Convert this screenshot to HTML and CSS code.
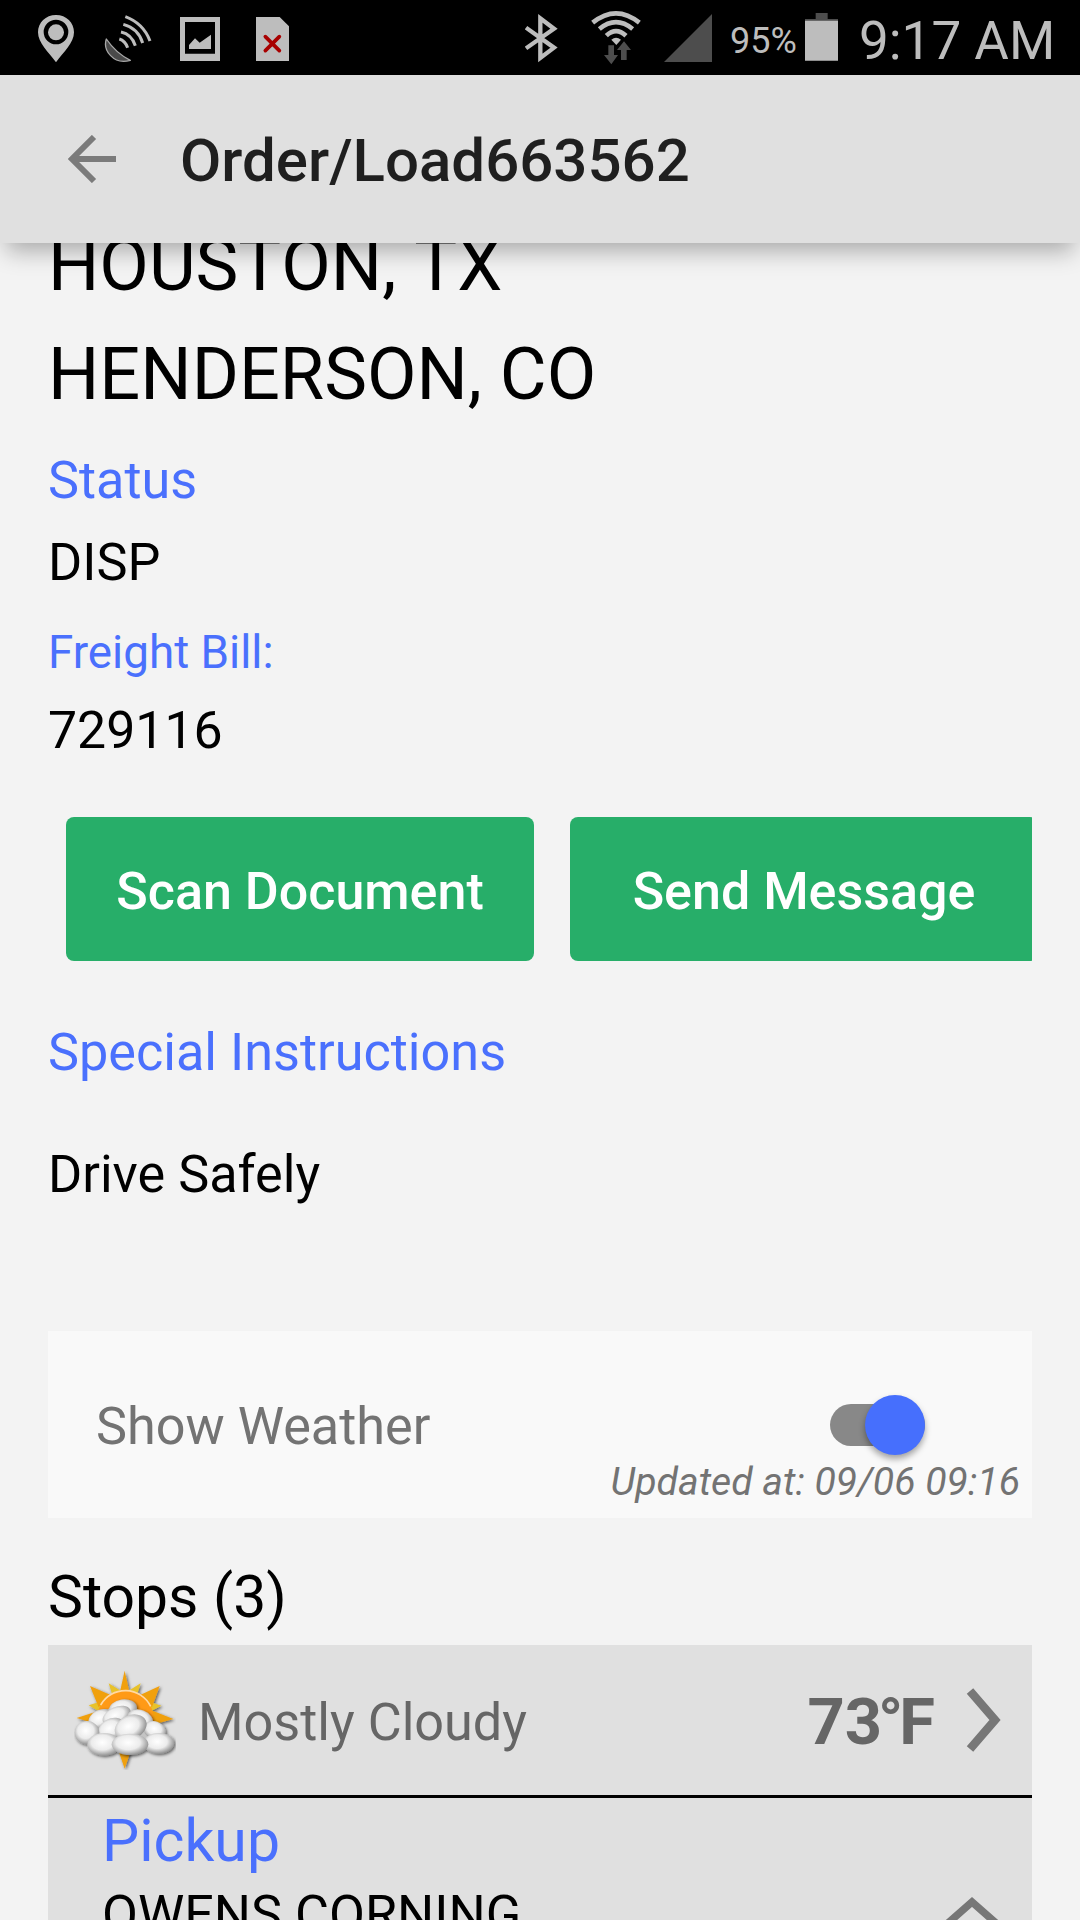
FILE: index.html
```html
<!DOCTYPE html>
<html lang="en">
<head>
  <meta charset="UTF-8" />
  <meta name="viewport" content="width=device-width, initial-scale=1.0"/>
  <title>Order/Load663562</title>
  <link rel="stylesheet" href="styles.css">
</head>
<body>
  <div class="statusbar">
    <div class="notifications">
      <svg width="36" height="75" viewBox="114 0 108 225">
        <path fill="#bdbdbd" fill-rule="evenodd" d="M168 45c-31 0-54 23-54 52 0 32 32 60 54 90 22-30 54-58 54-90 0-29-23-52-54-52zM168 59a37 37 0 1 1 0 74a37 37 0 1 1 0-74z"/>
        <circle cx="168" cy="97" r="24" fill="#bdbdbd"/>
      </svg>
      <svg width="48" height="75" viewBox="312 0 144 225">
        <path fill="#4a4a4a" stroke="#a8a8a8" stroke-width="4" stroke-linejoin="round" d="M319 117C308 150 340 196 391 181C365 168 338 145 319 117z"/>
        <g fill="none" stroke="#bdbdbd" stroke-width="9">
          <path d="M376 50Q430 70 450 123"/>
          <path d="M370 73Q415 85 428 129"/>
          <path d="M363 96Q395 103 406 137"/>
          <path d="M358 117Q375 122 383 143"/>
        </g>
      </svg>
      <svg width="40" height="75" viewBox="540 0 120 225">
        <path fill="#bdbdbd" fill-rule="evenodd" d="M540 51h120v132H540zM555 66v95h90V66z"/>
        <path fill="#bdbdbd" d="M567 147v-12l18-20 14 13 34-24v43z"/>
      </svg>
      <svg width="33" height="75" viewBox="768 0 99 225">
        <path fill="#bdbdbd" d="M768 51h71l28 28v104h-99z"/>
        <path stroke="#a80000" stroke-width="11" stroke-linecap="round" d="M796 110l42 42M838 110l-42 42"/>
      </svg>
    </div>
    <div class="system">
      <svg width="33" height="75" viewBox="135 0 99 225">
        <path fill="none" stroke="#bdbdbd" stroke-width="13" d="M138 83L222 143L181 174V55L222 86L138 145"/>
      </svg>
      <svg width="50" height="75" viewBox="333 0 150 225">
        <g fill="none" stroke="#bdbdbd" stroke-width="14">
          <path d="M338 68Q408 12 478 68"/>
          <path d="M358 87Q408 46 458 87"/>
          <path d="M379 107Q408 80 438 107"/>
        </g>
        <path fill="#bdbdbd" d="M394 119q14-11 29 0l-14 16z"/>
        <path fill="#4d4d4d" d="M385 136h17v29h12l-20 28-22-28h13zM423 180v-30h-12l21-26 21 26h-13v30z"/>
      </svg>
      <svg width="48" height="75" viewBox="552 0 144 225">
        <path fill="#4d4d4d" d="M696 42v144H552z"/>
      </svg>
      <span class="percent">95%</span>
      <svg width="33" height="75" viewBox="75 0 99 225">
        <path fill="#4d4d4d" d="M107 39h36v18h31v6H75v-6h32z"/>
        <path fill="#bdbdbd" d="M75 62h99v120H75z"/>
      </svg>
      <span class="clock">9:17 AM</span>
    </div>
  </div>

  <header class="appbar">
    <svg width="48" height="48" viewBox="0 0 48 48">
      <path fill="none" stroke="#7b7b7b" stroke-width="6" d="M48 24H4M26 2L4 24L26 46"/>
    </svg>
    <h1>Order/Load663562</h1>
  </header>

  <main class="content">
    <div class="city">HOUSTON, TX</div>
    <div class="city">HENDERSON, CO</div>
    <div class="label status-label">Status</div>
    <div class="value status-value">DISP</div>
    <div class="label bill-label">Freight Bill:</div>
    <div class="value bill-value">729116</div>

    <div class="buttons">
      <button>Scan Document</button>
      <button>Send Message</button>
    </div>

    <div class="label instr-label">Special Instructions</div>
    <div class="value instr-value">Drive Safely</div>

    <div class="weather-toggle">
      <div class="toggle-row">
        <span class="toggle-text">Show Weather</span>
        <div class="switch"><div class="thumb"></div></div>
      </div>
      <div class="updated">Updated at: 09/06 09:16</div>
    </div>

    <h2>Stops (3)</h2>

    <div class="stop">
      <div class="forecast">
        <svg class="weather-icon" width="102" height="100" viewBox="100 96 306 300">
          <defs>
            <radialGradient id="cloud" cx="45%" cy="42%" r="60%">
              <stop offset="0" stop-color="#ffffff"/>
              <stop offset="0.55" stop-color="#ececec"/>
              <stop offset="1" stop-color="#8c8c8c"/>
            </radialGradient>
            <filter id="shade" x="-10%" y="-10%" width="125%" height="125%">
              <feDropShadow dx="4" dy="4" stdDeviation="4" flood-color="#000" flood-opacity="0.6"/>
            </filter>
          </defs>
          <g filter="url(#shade)">
            <path fill="#e8c22c" d="M204 136L218 180L246 162zM300 136L286 180L258 162zM144 202L184 226L188 188zM362 203L322 224L318 188z"/>
            <path fill="#f0a010" d="M252 98L268 170H236zM148 144L208 170L174 208zM357 144L300 170L334 208zM108 240L175 218V260zM398 243L330 216V262zM252 392L234 340H270z"/>
            <circle cx="254" cy="243" r="85" fill="#ff9a12"/>
            <path fill="none" stroke="#ffd9a4" stroke-width="5" d="M180 201A85 85 0 0 1 330 205"/>
          </g>
          <g filter="url(#shade)">
            <path fill="#c4c4c4" d="M150 250L215 205H280L330 255L370 320H150z"/>
            <g fill="url(#cloud)">
              <ellipse cx="247" cy="213" rx="42" ry="29" transform="rotate(-8 247 213)"/>
              <ellipse cx="180" cy="242" rx="38" ry="27" transform="rotate(-25 180 242)"/>
              <ellipse cx="228" cy="234" rx="45" ry="27" transform="rotate(-25 228 234)"/>
              <ellipse cx="298" cy="245" rx="40" ry="29" transform="rotate(20 298 245)"/>
              <ellipse cx="342" cy="277" rx="34" ry="27" transform="rotate(20 342 277)"/>
              <ellipse cx="212" cy="273" rx="42" ry="31" transform="rotate(-30 212 273)"/>
              <ellipse cx="270" cy="268" rx="50" ry="36" transform="rotate(-25 270 268)"/>
              <ellipse cx="139" cy="284" rx="37" ry="35"/>
              <ellipse cx="354" cy="316" rx="46" ry="31"/>
              <ellipse cx="190" cy="319" rx="50" ry="34"/>
              <ellipse cx="268" cy="319" rx="55" ry="32"/>
            </g>
          </g>
        </svg>
        <span class="condition">Mostly Cloudy</span>
        <span class="temp">7<span class="degree">3°</span>F</span>
        <svg class="next" width="36" height="64" viewBox="0 0 36 64">
          <path fill="none" stroke="#777" stroke-width="8.5" d="M4 3L29 32L4 61"/>
        </svg>
      </div>
      <div class="stop-body">
        <div>
          <div class="label stop-type">Pickup</div>
          <div class="value stop-name">OWENS CORNING</div>
        </div>
        <svg class="collapse" width="72" height="40" viewBox="0 0 72 40">
          <path fill="none" stroke="#777" stroke-width="7.5" d="M3 34L36 5L69 34"/>
        </svg>
      </div>
    </div>
  </main>
</body>
</html>
```
FILE: styles.css
```css
* {
  box-sizing: border-box;
}
body {
  margin: 0;
  width: 1080px;
  height: 1920px;
  overflow: hidden;
  font-family: Roboto, sans-serif;
  background-color: #f3f3f3;
  color: #000;
}
svg {
  display: block;
  flex-shrink: 0;
}

/* status bar */
.statusbar {
  display: flex;
  justify-content: space-between;
  height: 75px;
  padding: 0 28px 0 38px;
  background-color: #000;
  color: #bdbdbd;
}
.notifications {
  display: flex;
}
.notifications svg + svg {
  margin-left: 30px;
}
.notifications svg:nth-child(3) {
  margin-left: 28px;
}
.notifications svg:last-child {
  margin-left: 36px;
}
.system {
  display: flex;
  white-space: nowrap;
}
.system svg + svg {
  margin-left: 33px;
}
.system svg:nth-child(3) {
  margin-left: 23px;
}
.percent {
  width: 93px;
  padding-left: 18px;
  font-size: 36px;
  line-height: 82px;
}
.clock {
  width: 214px;
  padding-left: 21px;
  font-size: 53px;
  font-weight: 400;
  line-height: 83px;
}

/* app bar */
.appbar {
  position: relative;
  z-index: 1;
  display: flex;
  align-items: center;
  gap: 64px;
  height: 168px;
  padding-left: 68px;
  background-color: #e0e0e0;
  box-shadow: 0 14px 22px -6px rgba(0, 0, 0, 0.3);
}
h1 {
  margin: 3px 0 0;
  font-size: 60px;
  font-weight: 500;
  color: #1f1f1f;
}

/* scrolled content */
.content {
  margin-top: -32px;
  padding: 0 48px;
}
.label {
  font-size: 52.2px;
  color: #4a70fd;
}
.value {
  font-size: 52.2px;
}
.city {
  font-size: 72px;
  line-height: 109px;
  font-kerning: none;
}
.status-label {
  padding-top: 1px;
  height: 101px;
  line-height: 101px;
}
.status-value {
  line-height: 65px;
}
.bill-label {
  margin-top: 15px;
  font-size: 45.8px;
  line-height: 85px;
}
.bill-value {
  height: 70px;
  font-size: 51.8px;
  line-height: 72px;
}
.buttons {
  display: flex;
  gap: 36px;
  margin-top: 52px;
  padding-left: 18px;
  overflow: hidden;
}
button {
  flex: 0 0 468px;
  height: 144px;
  padding: 5px 0 0;
  border: none;
  border-radius: 8px;
  background-color: #27ae69;
  color: #fff;
  font-family: inherit;
  font-size: 52px;
  font-weight: 500;
}
.instr-label {
  height: 182px;
  line-height: 184px;
}
.instr-value {
  height: 62px;
  line-height: 64px;
}

.weather-toggle {
  height: 187px;
  margin-top: 126px;
  padding: 64px 12px 0 48px;
  background-color: #f9f9f9;
  color: #737373;
}
.toggle-row {
  display: flex;
  justify-content: space-between;
  align-items: center;
  height: 60px;
  padding-right: 95px;
  font-size: 52.2px;
}
.toggle-text {
  padding-top: 2px;
}
.switch {
  display: flex;
  justify-content: flex-end;
  align-items: center;
  width: 95px;
  height: 42px;
  border-radius: 21px;
  background-color: #888;
}
.thumb {
  flex-shrink: 0;
  width: 60px;
  height: 60px;
  border-radius: 50%;
  background-color: #466ffd;
  box-shadow: 0 4px 6px rgba(0, 0, 0, 0.35);
}
.updated {
  font-size: 39.2px;
  font-style: italic;
  line-height: 54px;
  text-align: right;
}

h2 {
  margin: 0;
  font-size: 58.8px;
  font-weight: 400;
  line-height: 127px;
  padding-top: 15px;
  height: 127px;
}
.stop {
  background-color: #e0e0e0;
}
.forecast {
  display: flex;
  align-items: center;
  height: 153px;
  padding: 0 30px 0 26px;
  border-bottom: 3px solid #000;
  color: #666;
}
.condition {
  flex: 1;
  padding: 4px 0 0 22px;
  font-size: 52.2px;
}
.temp {
  padding-top: 4px;
  font-size: 65px;
  font-weight: 700;
}
.degree {
  letter-spacing: -4px;
}
.next {
  margin-left: 31px;
}
.stop-body {
  display: flex;
  justify-content: space-between;
  padding: 0 24px 0 54px;
}
.stop-type {
  font-size: 59px;
  line-height: 85px;
}
.stop-name {
  line-height: 63px;
}
.collapse {
  margin-top: 99px;
}
```
